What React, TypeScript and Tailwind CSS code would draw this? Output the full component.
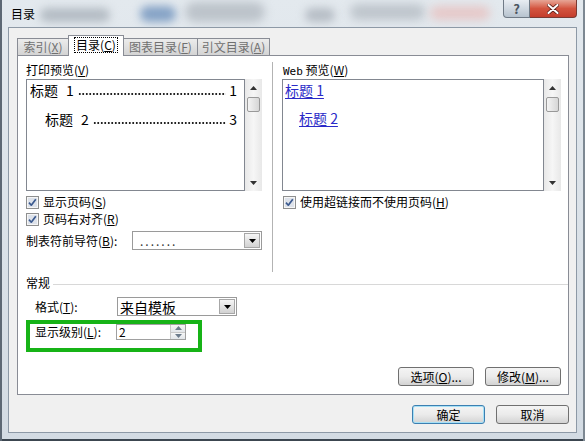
import React from "react";

// mnemonic letter, e.g. (X)
const U = ({ k }: { k: string }) => (
  <>
    (<span className="underline underline-offset-[1px]">{k}</span>)
  </>
);

const CheckBox = () => (
  <svg width="13" height="13" viewBox="0 0 13 13" className="shrink-0">
    <rect x="0.5" y="0.5" width="12" height="12" fill="#f6f6f6" stroke="#8e8f8f" />
    <rect x="2" y="2" width="9" height="9" fill="#dde2ea" />
    <path d="M3 6.6 5.3 9.2 9.8 3.2" fill="none" stroke="#3b5a8f" strokeWidth="1.7" strokeLinejoin="round" />
  </svg>
);

const Tri = ({ up, color = "#333" }: { up?: boolean; color?: string }) => (
  <svg width="7" height="4" viewBox="0 0 7 4">
    <path d={up ? "M0 4 3.5 0 7 4Z" : "M0 0 7 0 3.5 4Z"} fill={color} />
  </svg>
);

const ScrollBar = () => (
  <div className="flex w-[17px] flex-col items-center bg-gradient-to-r from-[#e8e8e8] via-[#f6f6f6] to-[#e8e8e8]">
    <div className="flex h-[17px] items-center">
      <Tri up />
    </div>
    <div className="mt-px h-[15px] w-[13px] rounded-[2px] border border-[#999] bg-gradient-to-r from-[#f4f4f4] to-[#d6d6d6]" />
    <div className="flex-1" />
    <div className="flex h-[17px] items-center">
      <Tri />
    </div>
  </div>
);

const DropBtn = () => (
  <div className="ml-auto mr-px flex h-[15px] w-[16px] items-center justify-center border border-[#a7a7a7] bg-gradient-to-b from-[#f6f6f6] to-[#d2d2d2]">
    <Tri color="#000" />
  </div>
);

const Button = ({ children, w, primary }: { children: React.ReactNode; w: string; primary?: boolean }) => (
  <div
    className={
      "flex h-[19px] items-center justify-center rounded-[3px] border bg-gradient-to-b from-[#f4f4f4] via-[#ebebeb] to-[#d3d3d3] leading-[14px] " +
      w +
      (primary ? " border-[#3c7fb1] shadow-[inset_0_0_0_1px_#a6e0f6]" : " border-[#707070]")
    }
  >
    {children}
  </div>
);

const Tab = ({ children, cls }: { children: React.ReactNode; cls: string }) => (
  <div
    className={
      "flex h-[17px] items-center justify-center border-t border-[#898c95] bg-gradient-to-b from-[#ececec] to-[#d4d4d4] leading-[14px] text-[#707070] " +
      cls
    }
  >
    {children}
  </div>
);

// dotted tab leader
const Dots = () => (
  <span className="mb-[5px] h-[2px] flex-1 self-end bg-[radial-gradient(circle,#222_0.7px,transparent_1.1px)] bg-[length:3.5px_2px] bg-repeat-x" />
);

const App = () => {
  return (
    <div className="relative h-[441px] w-[585px] overflow-hidden bg-gradient-to-b from-[#e3e9ee] to-[#d3dbe3] font-[family-name:'Noto_Sans_CJK_SC','Noto_Sans',sans-serif] text-[12px] text-black">
      {/* blurred glass behind the title bar */}
      <div className="pointer-events-none absolute inset-x-0 top-0 h-[27px] overflow-hidden">
        <div className="absolute left-[40px] top-[8px] h-[14px] w-[70px] rounded-full bg-[#b4bcc4] blur-[4px]" />
        <div className="absolute left-[140px] top-[6px] h-[16px] w-[36px] rounded-full bg-[#86a3c6] blur-[4px]" />
        <div className="absolute left-[185px] top-[2px] h-[20px] w-[80px] rounded-full bg-[#bcc3ca] blur-[5px]" />
        <div className="absolute left-[305px] top-[8px] h-[14px] w-[30px] rounded-full bg-[#b6bdc5] blur-[4px]" />
        <div className="absolute left-[350px] top-[4px] h-[16px] w-[75px] rounded-full bg-[#bec5cc] blur-[5px]" />
        <div className="absolute left-[430px] top-[6px] h-[14px] w-[60px] rounded-full bg-[#e6c8c8] blur-[5px]" />
      </div>

      <div className="relative flex h-full flex-col border-l-2 border-r-2 border-l-[#5d6874] border-r-[#7d8892]">
        {/* title bar */}
        <div className="flex h-[27px] items-start">
          <div className="pl-[9px] pt-[6px] leading-[16px]">目录</div>
          <div className="ml-auto mr-[6px] flex">
            <div className="flex h-[18px] w-[27px] items-center justify-center rounded-bl-[4px] border border-t-0 border-[#6f7a86] bg-gradient-to-b from-[#e8edf2] to-[#b7c3cf] text-[13px] font-bold leading-none text-[#4a5560]">
              ?
            </div>
            <div className="flex h-[18px] w-[47px] items-center justify-center rounded-br-[4px] border border-l-0 border-t-0 border-[#7a3a33] bg-gradient-to-b from-[#e6a596] via-[#d3543f] to-[#c43d2c]">
              <svg width="12" height="10" viewBox="0 0 12 10">
                <path d="M1.5 1 10.5 9M10.5 1 1.5 9" stroke="#5a1d17" strokeWidth="3.6" strokeLinecap="round" />
                <path d="M1.5 1 10.5 9M10.5 1 1.5 9" stroke="#fff" strokeWidth="2" strokeLinecap="round" />
              </svg>
            </div>
          </div>
        </div>

        {/* dialog body */}
        <div className="ml-[6px] flex h-[406px] w-[569px] flex-col border border-[#8d99a6] bg-[#f0f0f0]">
          {/* tabs */}
          <div className="flex h-[27px] items-end pl-[8px]">
            <Tab cls="w-[51px] border-l">
              索引<U k="X" />
            </Tab>
            <div className="relative z-10 -mb-px flex h-[21px] w-[56px] items-start justify-center border border-b-0 border-[#898c95] bg-white pt-px">
              <span className="border border-dotted border-black px-px leading-[14px]">
                目录<U k="C" />
              </span>
            </div>
            <Tab cls="w-[74px] border-r">
              图表目录<U k="F" />
            </Tab>
            <Tab cls="w-[72px] border-r">
              引文目录<U k="A" />
            </Tab>
          </div>

          {/* tab panel */}
          <div className="ml-[8px] flex h-[340px] w-[552px] flex-col border border-[#898c95] bg-white pl-[8px] pt-[7px]">
            <div className="flex h-[209px]">
              {/* print preview */}
              <div className="flex w-[236px] flex-col">
                <div className="h-[14px] leading-[14px]">
                  打印预览<U k="V" />
                </div>
                <div className="mt-[2px] flex h-[112px]">
                  <div className="flex w-[219px] flex-col border border-[#828790] bg-white text-[14px]">
                    <div className="flex h-[20px] items-center pl-[3px] pr-[7px]">
                      <span>标题</span>
                      <span className="ml-[8px] mr-[4px]">1</span>
                      <Dots />
                      <span className="ml-[3px]">1</span>
                    </div>
                    <div className="mt-[9px] flex h-[20px] items-center pl-[18px] pr-[7px]">
                      <span>标题</span>
                      <span className="ml-[8px] mr-[4px]">2</span>
                      <Dots />
                      <span className="ml-[3px]">3</span>
                    </div>
                  </div>
                  <ScrollBar />
                </div>
                <div className="mt-[4px] flex h-[14px] items-center gap-[4px] leading-[14px]">
                  <CheckBox />
                  <span>
                    显示页码<U k="S" />
                  </span>
                </div>
                <div className="mt-[3px] flex h-[14px] items-center gap-[4px] leading-[14px]">
                  <CheckBox />
                  <span>
                    页码右对齐<U k="R" />
                  </span>
                </div>
                <div className="mt-[5px] flex h-[19px] items-center">
                  <span className="w-[106px] leading-[14px]">
                    制表符前导符<U k="B" />:
                  </span>
                  <div className="flex h-[19px] w-[130px] items-center border border-[#9a9a9a] bg-white">
                    <span className="pl-[7px] leading-[14px] tracking-[2px] text-[#333]">.......</span>
                    <DropBtn />
                  </div>
                </div>
              </div>

              <div className="-mt-px ml-[10px] h-[210px] w-px bg-[#b3b3b3]" />

              {/* web preview */}
              <div className="ml-[9px] flex w-[280px] flex-col">
                <div className="h-[14px] pl-px leading-[14px]">
                  <span className="font-[family-name:'DejaVu_Sans_Mono',monospace] text-[11px]">Web</span> 预览<U k="W" />
                </div>
                <div className="mt-[2px] flex h-[112px]">
                  <div className="flex w-[262px] flex-col border border-[#828790] bg-white text-[14px] text-[#2a2ac8]">
                    <div className="flex h-[20px] items-center pl-[2px]">
                      <span className="underline underline-offset-2">标题 1</span>
                    </div>
                    <div className="mt-[8px] flex h-[20px] items-center pl-[16px]">
                      <span className="underline underline-offset-2">标题 2</span>
                    </div>
                  </div>
                  <ScrollBar />
                </div>
                <div className="mt-[4px] flex h-[14px] items-center gap-[4px] pl-px leading-[14px]">
                  <CheckBox />
                  <span>
                    使用超链接而不使用页码<U k="H" />
                  </span>
                </div>
              </div>
            </div>

            {/* general */}
            <div className="mt-[4px] flex h-[14px] items-center">
              <span className="leading-[14px]">常规</span>
              <div className="ml-[3px] mt-[3px] h-px flex-1 bg-[#d8d8d8]" />
            </div>
            <div className="mt-[7px] flex h-[19px] items-center pl-[9px]">
              <span className="w-[82px] leading-[14px]">
                格式<U k="T" />:
              </span>
              <div className="flex h-[19px] w-[120px] items-center border border-[#9a9a9a] bg-white">
                <span className="pl-[2px] text-[14px] leading-[16px]">来自模板</span>
                <DropBtn />
              </div>
            </div>
            <div className="mt-[4px] flex h-[32px] w-[176px] items-start border-4 border-[#17b317] pl-[5px]">
              <span className="mt-px w-[81px] leading-[14px]">
                显示级别<U k="L" />:
              </span>
              <div className="flex h-[16px] w-[70px] items-center border border-[#a0a0a0] bg-white">
                <span className="pl-[2px] leading-[14px]">2</span>
                <div className="ml-auto flex h-full w-[15px] flex-col border-l border-[#c8c8c8]">
                  <div className="flex flex-1 items-center justify-center bg-gradient-to-b from-[#f6f6f6] to-[#e2e6ea]">
                    <Tri up color="#6c7c8c" />
                  </div>
                  <div className="flex flex-1 items-center justify-center border-t border-[#c8c8c8] bg-gradient-to-b from-[#f6f6f6] to-[#e2e6ea]">
                    <Tri color="#6c7c8c" />
                  </div>
                </div>
              </div>
            </div>
            <div className="mt-[15px] flex justify-end gap-[11px] pr-[7px]">
              <Button w="w-[76px]">
                选项<U k="O" />...
              </Button>
              <Button w="w-[76px]">
                修改<U k="M" />...
              </Button>
            </div>
          </div>

          {/* dialog buttons */}
          <div className="mt-[10px] flex justify-end gap-[11px] pr-[7px]">
            <Button w="w-[73px]" primary>
              确定
            </Button>
            <Button w="w-[73px]">取消</Button>
          </div>
        </div>

        <div className="flex-1 border-b-2 border-[#3c4650]" />
      </div>
    </div>
  );
};

export default App;
